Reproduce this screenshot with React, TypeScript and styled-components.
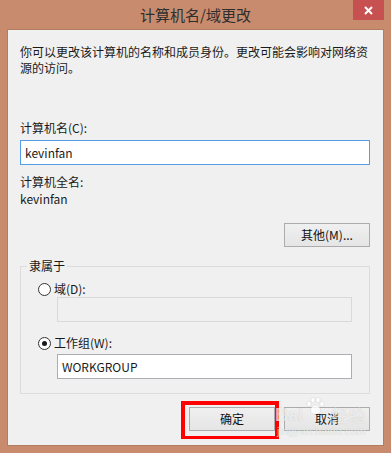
import styled, { createGlobalStyle } from "styled-components";

const GlobalStyle = createGlobalStyle`
  html, body {
    margin: 0;
    padding: 0;
    background: #c98b6d;
  }
  * {
    box-sizing: border-box;
  }
`;

const FONT = `"Noto Sans CJK SC", "Microsoft YaHei", sans-serif`;

const Window = styled.div`
  width: 391px;
  height: 453px;
  display: flex;
  flex-direction: column;
  background: #c98b6d;
  font-family: ${FONT};
  font-size: 12px;
  color: #1a1a1a;
  overflow: hidden;
  position: relative;
`;

const TitleBar = styled.div`
  height: 29px;
  display: grid;
  grid-template-columns: 1fr auto 1fr;
  align-items: start;
`;

const Title = styled.div`
  grid-column: 2;
  font-size: 15px;
  line-height: 30px;
  color: #2e2e2e;
`;

const CloseButton = styled.div`
  grid-column: 3;
  justify-self: end;
  margin-right: 7px;
  width: 31px;
  height: 20px;
  background: #c75050;
  display: flex;
  align-items: center;
  justify-content: center;
`;

const Body = styled.div`
  flex: 1;
  margin: 0 7px 7px;
  border: 1px solid #b27d61;
  background: #f0f0f0;
  padding: 14px 13px 0 12px;
  display: flex;
  flex-direction: column;
`;

const Intro = styled.p`
  margin: 0;
  line-height: 16px;
  white-space: nowrap;
`;

const Label = styled.div<{ gap?: number }>`
  margin-top: ${(p) => p.gap ?? 0}px;
  line-height: 16px;
`;

const TextBox = styled.div<{ focused?: boolean; disabled?: boolean; indent?: number; gap?: number }>`
  height: 25px;
  margin-top: ${(p) => p.gap ?? 0}px;
  margin-left: ${(p) => p.indent ?? 0}px;
  border: 1px solid
    ${(p) => (p.focused ? "#569de5" : p.disabled ? "#d9d9d9" : "#abadb3")};
  background: ${(p) => (p.disabled ? "#f0f0f0" : "#ffffff")};
  padding: 0 4px;
  display: flex;
  align-items: center;
  line-height: 16px;
`;

const ButtonRow = styled.div<{ gap?: number }>`
  margin-top: ${(p) => p.gap ?? 0}px;
  display: flex;
  justify-content: flex-end;
  gap: 9px;
`;

const Button = styled.div`
  width: 86px;
  height: 24px;
  border: 1px solid #acacac;
  background: linear-gradient(#f0f0f0, #e5e5e5);
  display: flex;
  align-items: center;
  justify-content: center;
  line-height: 16px;
  color: #111;
`;

const Highlight = styled.div`
  position: relative;
  &::after {
    content: "";
    position: absolute;
    left: -8px;
    right: -4px;
    top: -6px;
    bottom: -8px;
    border: 4px solid #ff0000;
    border-bottom-width: 3px;
    pointer-events: none;
  }
`;

const Group = styled.fieldset`
  margin: 11px 0 0;
  padding: 0;
  border: 1px solid #dcdcdc;
  min-width: 0;
`;

const Legend = styled.legend`
  margin-left: 6px;
  padding: 0 2px;
  line-height: 16px;
`;

const GroupBody = styled.div`
  padding: 7px 17px 14px 17px;
  display: flex;
  flex-direction: column;
`;

const RadioRow = styled.div<{ gap?: number }>`
  margin-top: ${(p) => p.gap ?? 0}px;
  display: flex;
  align-items: center;
  gap: 3px;
  height: 16px;
  line-height: 16px;
`;

const Radio = styled.span<{ checked?: boolean }>`
  width: 13px;
  height: 13px;
  border-radius: 50%;
  border: 1px solid #333;
  background: #fff;
  display: flex;
  align-items: center;
  justify-content: center;
  &::after {
    content: "";
    width: 5px;
    height: 5px;
    border-radius: 50%;
    background: ${(p) => (p.checked ? "#1a1a1a" : "transparent")};
  }
`;

const Watermark = styled.div`
  position: absolute;
  left: 275px;
  top: 397px;
  display: flex;
  flex-direction: column;
  align-items: flex-start;
  color: rgba(255, 255, 255, 0.7);
  text-shadow: 0 0 1px rgba(0, 0, 0, 0.2);
  pointer-events: none;
`;

const MarkTop = styled.div`
  display: flex;
  align-items: flex-end;
  font-family: "Liberation Sans", Arial, sans-serif;
  font-weight: bold;
  font-size: 18px;
  line-height: 20px;
  gap: 2px;
`;

const MarkCn = styled.span`
  font-family: ${FONT};
  font-weight: normal;
  font-size: 17px;
  margin-left: 4px;
`;

const MarkUrl = styled.div`
  font-family: "Liberation Sans", Arial, sans-serif;
  font-size: 11px;
  line-height: 13px;
  margin-left: 2px;
`;

function Paw() {
  return (
    <svg width="20" height="18" viewBox="0 0 20 18" style={{ marginBottom: 10 }}>
      <g fill="rgba(255,255,255,0.8)" stroke="rgba(0,0,0,0.12)" strokeWidth="0.6">
        <ellipse cx="4" cy="7" rx="2.2" ry="2.8" />
        <ellipse cx="8" cy="3" rx="2.2" ry="2.8" />
        <ellipse cx="13" cy="3" rx="2.2" ry="2.8" />
        <ellipse cx="17" cy="7" rx="2.2" ry="2.8" />
        <path d="M10.5 8 C6 8 4.5 14 6.5 16 C8 17.5 13 17.5 14.5 16 C16.5 14 15 8 10.5 8 Z" />
      </g>
    </svg>
  );
}

export default function App() {
  return (
    <>
      <GlobalStyle />
      <Window>
        <TitleBar>
          <Title>计算机名/域更改</Title>
          <CloseButton>
            <svg width="9" height="9" viewBox="0 0 9 9">
              <path d="M1 1 L8 8 M8 1 L1 8" stroke="#fff" strokeWidth="2" />
            </svg>
          </CloseButton>
        </TitleBar>
        <Body>
          <Intro>
            你可以更改该计算机的名称和成员身份。更改可能会影响对网络资
            <br />
            源的访问。
          </Intro>
          <Label gap={44}>计算机名(C):</Label>
          <TextBox focused gap={4}>kevinfan</TextBox>
          <Label gap={9}>计算机全名:</Label>
          <Label gap={1}>kevinfan</Label>
          <ButtonRow gap={16}>
            <Button>其他(M)...</Button>
          </ButtonRow>
          <Group>
            <Legend>隶属于</Legend>
            <GroupBody>
              <RadioRow>
                <Radio />
                <span>域(D):</span>
              </RadioRow>
              <TextBox disabled indent={19} />
              <RadioRow gap={13}>
                <Radio checked />
                <span>工作组(W):</span>
              </RadioRow>
              <TextBox indent={19} gap={3}>WORKGROUP</TextBox>
            </GroupBody>
          </Group>
          <ButtonRow gap={13}>
            <Highlight>
              <Button>确定</Button>
            </Highlight>
            <Button>取消</Button>
          </ButtonRow>
        </Body>
        <Watermark>
          <MarkTop>
            <span>Bai</span>
            <Paw />
            <MarkCn>经验</MarkCn>
          </MarkTop>
          <MarkUrl>jingyan.baidu.com</MarkUrl>
        </Watermark>
      </Window>
    </>
  );
}
